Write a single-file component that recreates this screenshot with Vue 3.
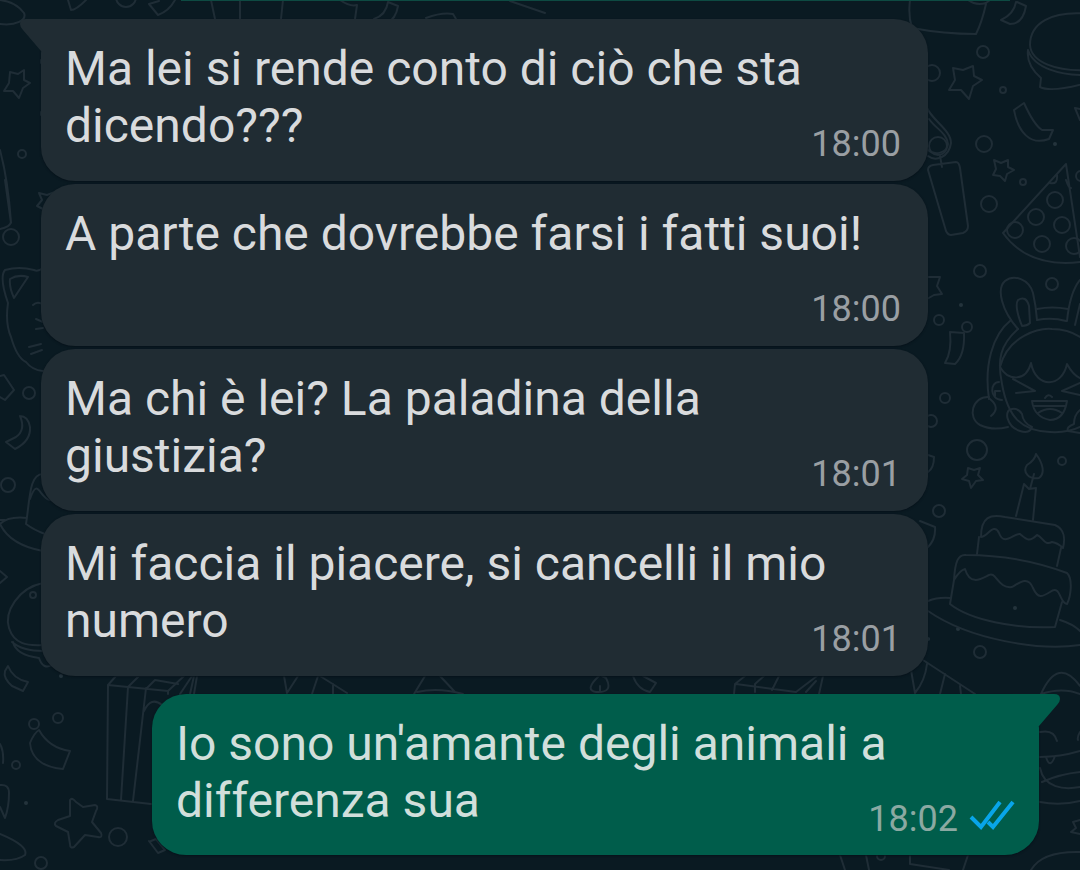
<script setup>
const messages = [
  { id: 1, text: 'Ma lei si rende conto di ciò che sta dicendo???', time: '18:00', tail: true },
  { id: 2, text: 'A parte che dovrebbe farsi i fatti suoi!', time: '18:00' },
  { id: 3, text: 'Ma chi è lei? La paladina della giustizia?', time: '18:01' },
  { id: 4, text: 'Mi faccia il piacere, si cancelli il mio numero', time: '18:01' },
  { id: 5, text: "Io sono un'amante degli animali a differenza sua", time: '18:02', mine: true, tail: true },
]

const confetti = [
  [983, 52, 6], [932, 73, 8], [1003, 90, 3], [984, 144, 8], [1023, 182, 3], [989, 204, 8],
  [980, 271, 6], [1052, 284, 6], [939, 320, 5], [967, 327, 5], [945, 398, 5], [931, 421, 6],
  [977, 450, 10], [1062, 461, 4], [939, 511, 6], [980, 652, 6], [1081, 176, 5],
  [22, 154, 4], [11, 237, 8], [29, 393, 6], [8, 485, 7], [33, 595, 3],
  [34, 724, 5], [58, 718, 5], [16, 765, 4], [118, 837, 9], [41, 863, 6], [126, -3, 10],
  [881, 856, 4],
]
const specks = [[1055, 144], [961, 305], [1015, 608], [958, 629], [61, 676], [26, 803], [928, 639]]
</script>

<template>
  <main class="chat">
    <svg class="wallpaper" viewBox="0 0 1080 870" preserveAspectRatio="xMidYMin slice" aria-hidden="true">
      <g class="doodle">
        <circle v-for="(c, i) in confetti" :key="'c' + i" :cx="c[0]" :cy="c[1]" :r="c[2]" />
        <circle v-for="(s, i) in specks" :key="'s' + i" class="speck" :cx="s[0]" :cy="s[1]" r="2" />

        <!-- cup, streamer and bowl along the top right -->
        <path d="M910 0Q908 16 912 28Q944 34 976 34Q982 22 986 4M968 0Q976 6 986 3L990 0" />
        <path d="M1017 2L1026 6Q1023 24 1010 24L1001 20Q1014 14 1016 2" />
        <path d="M1090 14C1050 10 1030 24 1030 45C1031 62 1056 72 1090 70M1028 50C1034 68 1060 76 1090 75M1028 50Q1026 65 1041 78L1040 87Q1052 93 1090 82" />

        <!-- stars -->
        <path d="M953 68L963 70L973 66L974 76L982 80L973 86L969 99L961 90L949 90L955 80Z" />
        <path d="M994 160L1001 163L1008 160L1008 167L1014 170L1007 174L1005 181L1000 176L993 175L996 169Z" />
        <path d="M968 468L974 470L980 468L978 475L983 480L976 481L971 488L969 481L962 479L967 475Z" />
        <path d="M928 277L940 277L937 286L942 294L934 295L927 299" />
        <path d="M10 72L18 74L24 70L24 80L30 83L23 88L19 98L13 91L4 91L9 83Z" />
        <path d="M39 193L47 195L55 192M39 193L42 200L37 206L43 209" />
        <path d="M70 800Q72 797 76 802L83 807L95 805Q99 806 96 811L92 822L101 833Q103 838 98 837L85 835L74 847Q70 849 70 844L68 832L56 826Q53 823 58 820L70 816Z" />
        <path d="M0 571L7 577L0 583M1080 820L1073 822L1076 828L1071 832L1080 834" />

        <!-- ribbons -->
        <path d="M1014 110L1024 103Q1034 125 1042 130L1053 130L1049 139C1030 146 1018 132 1014 110Z" />
        <path d="M950 332L964 333Q965 355 955 364L945 363Q952 352 950 332Z" />
        <path d="M928 455L934 457Q934 468 928 472M920 521L935 527Q936 539 928 547M1075 108L1080 109M1075 108L1080 120" />
        <path d="M0 376L4 375L14 390L5 400L0 397" />
        <path d="M20 416Q26 430 16 437L6 442L15 449Q31 441 30 427Q28 416 20 416" />
        <path d="M8 666Q13 679 28 682L23 691L12 686Q3 678 5 671Z" />
        <path d="M39 730Q49 748 70 751L63 769Q32 766 30 743Q34 733 39 730Z" />
        <path d="M68 0L71 10Q76 10 86 0M149 4L159 1M149 4L158 15Q169 11 175 0M151 841L156 839L165 850L158 853L149 841" />

        <!-- hanging bauble and candle -->
        <path d="M927 108C932 120 951 130 951 143C949 157 936 162 928 156M929 119C935 128 947 133 948 144C947 153 935 156 928 150" />
        <circle cx="938" cy="146" r="9" />
        <path d="M940 156L942 167M928 170Q928 166 933 165L956 162Q959 162 960 168L968 226Q968 231 963 233L951 235Q948 235 946 231Z" />

        <!-- pizza -->
        <path d="M1066 164L1003 233Q1028 268 1080 262M1066 164L1080 257M1050 183Q1058 185 1057 175M1066 180Q1069 189 1071 188" />
        <circle cx="1055" cy="200" r="8" />
        <circle cx="1036" cy="217" r="8" />
        <circle cx="1015" cy="230" r="8" />
        <circle cx="1062" cy="225" r="8" />
        <circle cx="1042" cy="244" r="8" />
        <circle cx="1074" cy="246" r="8" />

        <!-- girl with rabbit ears -->
        <path d="M1018 329C1002 311 996 289 1005 281C1014 274 1029 279 1033 293Q1036 306 1037 320" />
        <path d="M1022 326Q1014 306 1018 300Q1026 295 1029 306L1030 323Q1027 326 1022 326ZM1037 309Q1052 306 1068 309M1037 320Q1052 317 1066 321M1080 280Q1070 292 1067 321M1080 304L1075 325" />
        <path d="M1011 320C992 335 984 366 989 399M1018 329C1000 345 997 360 1002 384C1008 418 1022 431 1050 432Q1068 433 1080 427" />
        <path d="M1000 367C1008 335 1040 328 1052 329Q1068 329 1080 337M1000 367C1008 381 1026 382 1031 363C1036 389 1062 388 1067 364Q1073 375 1080 378" />
        <path d="M1013 379L1035 391L1016 393M1080 383L1062 391L1080 395M1045 398Q1048 393 1052 397" />
        <path d="M1032 401H1067Q1064 420 1050 420Q1034 417 1032 401ZM1034 406H1065M1038 413Q1050 405 1062 413" />
        <path d="M999 382C990 382 989 399 1002 400M1000 391H995V396M989 397C972 396 967 418 980 425Q992 431 1008 427M990 399Q1001 408 991 416" />
        <path d="M1012 409C1003 410 1007 427 1020 431Q1030 434 1032 427Q1023 423 1022 414Q1018 408 1012 409M1080 410Q1074 415 1074 424Q1066 427 1068 431L1080 433" />

        <!-- birthday cake -->
        <path d="M1036 454C1042 462 1046 473 1039 478C1029 480 1022 472 1027 465Q1035 460 1036 454M1034 474L1030 489M1016 516L1024 484L1029 489L1036 488L1033 520" />
        <path d="M981 537C981 517 990 514 1005 517L1055 525C1065 529 1065 540 1063 548M981 537C987 537 994 522 999 533C1004 547 1014 533 1020 534C1026 539 1029 543 1037 535C1043 537 1044 546 1052 542Q1058 543 1063 548M979 537L977 554M1061 548L1057 566" />
        <path d="M954 580C955 562 958 554 966 555C1005 555 1040 563 1067 573C1073 579 1071 596 1067 604C1059 603 1061 584 1050 592C1042 597 1038 599 1033 588C1028 575 1019 583 1012 587C998 589 996 571 989 575C981 579 970 586 965 569Q960 570 954 580L950 604C970 620 1015 629 1055 627L1062 602" />
        <path d="M928 601Q938 597 950 598M928 611C970 640 1040 651 1080 645M1060 620Q1073 624 1080 631" />

        <!-- left edge: hat, cat, helmet, legs -->
        <path d="M0 24C16 26 27 20 24 13C18 5 9 1 0 0M0 150Q8 180 11 222Q10 227 0 229M5 180L11 223M41 60V63M41 112V115" />
        <path d="M43 268Q38 272 34 270Q19 266 5 270Q-1 277 8 303Q5 323 11 337Q17 358 26 362Q32 370 43 371M10 279Q18 274 28 277L14 298Q9 287 10 279ZM33 305Q37 301 42 304M36 319L43 322M36 329L43 328M29 347L41 344M31 354L42 350" />
        <path d="M43 474C29 474 30 499 26 524Q34 530 45 534M30 499C38 476 39 498 50 500M27 518Q8 516 0 524Q10 545 43 551M0 520H5" />
        <path d="M43 583C18 588 4 612 9 628C14 644 27 646 43 645M12 642Q22 651 44 651M13 642Q16 655 39 658Q43 670 52 665" />
        <path d="M0 744Q4 751 3 763M0 785Q9 784 9 793Q9 807 5 818L0 807M0 834Q29 846 25 855Q17 861 0 860" />

        <!-- present and cones between the bubbles -->
        <path d="M108 685L116 676H184L168 691L108 685L107 799L151 804M128 687L121 800M146 688L133 801M144 711Q151 696 162 705M128 687L139 676M147 688L155 680L178 684M168 691V694M180 694L192 676M190 694L194 676M194 694L197 676" />
        <path d="M284 676L287 693L298 676M318 676L312 694M320 676L347 693M333 684V694M414 694L425 676M440 676L455 692M417 692Q438 687 463 694" />
        <path d="M599 676Q584 690 596 692Q614 693 606 678L602 676M600 686V692M633 676Q638 690 650 692L656 683L643 676M734 694L735 684L745 676M736 684L796 692L817 676M755 692V684L764 676M772 690L779 676M806 692L816 681M819 694L823 676" />
        <path d="M911 670L915 693Q925 681 927 664M923 660L975 694M945 674L940 694M960 686L961 694M1041 694Q1058 656 1080 686M1041 694Q1062 687 1080 694" />

        <!-- bottom right face and plate -->
        <path d="M1040 732Q1054 729 1057 741M1080 732Q1077 737 1078 740M1040 757Q1060 757 1080 751M1046 757Q1050 770 1055 756M1040 768C1044 788 1064 790 1080 787M1042 782Q1060 774 1080 772M1040 802Q1060 806 1080 801M1031 870Q1042 851 1080 852M840 855L845 870M866 855L869 870M910 855V864L949 870M968 855L963 870" />

        <!-- tops of doodles peeking above the first bubble -->
        <path d="M211 0L215 19M240 0V19M283 0L281 19M340 0Q350 7 357 5Q356 12 355 19M388 2L398 6Q396 19 386 24M388 2Q386 15 374 19M426 18Q442 12 453 14L456 19M510 1L545 13" />
      </g>
    </svg>

    <div class="previous"></div>
    <ol class="messages">
      <li v-for="m in messages" :key="m.id" class="bubble" :class="{ mine: m.mine }">
        <svg v-if="m.tail" class="tail" viewBox="0 0 56 33" aria-hidden="true">
          <path d="M56 0H6Q0 0 0 5Q0 8 3 11L21 32H56Z" />
        </svg>
        <span class="text">{{ m.text }}</span>
        <div class="meta">
          <time>{{ m.time }}</time>
          <svg v-if="m.mine" class="ticks" viewBox="0 0 46 34" role="img" aria-label="Letto">
            <path d="M2 19L12 29L31 4M19 24L24 29L44 4" />
          </svg>
        </div>
      </li>
    </ol>
  </main>
</template>

<style>
body {
  background: #0a1a22;
}
</style>

<style scoped>
.chat {
  position: relative;
  box-sizing: border-box;
  min-height: 100vh;
  padding: 0 41px 14px;
  overflow: hidden;
  background: #0a1a22;
  font-family: Roboto, "Noto Sans", sans-serif;
}
.wallpaper {
  position: absolute;
  inset: 0;
  width: 100%;
  height: 100%;
}
.doodle {
  fill: none;
  stroke: #1f2d36;
  stroke-width: 2;
  stroke-linejoin: round;
  stroke-linecap: round;
}
.speck {
  fill: #24333c;
  stroke: none;
}
.previous {
  position: relative;
  height: 1px;
  margin: 0 29px 18px 140px;
  background: #0d4a42;
}
.messages {
  position: relative;
  display: flex;
  flex-direction: column;
  gap: 3px;
  margin: 0;
  padding: 0;
  list-style: none;
}
.bubble {
  --fill: #202c33;
  position: relative;
  display: flow-root;
  margin-right: 111px;
  padding: 21px 27px 16px 24px;
  border-radius: 34px;
  background: var(--fill);
  box-shadow: 0 1px 2px #06121a;
  color: #d9dbdd;
  font-size: 48px;
  line-height: 57px;
}
.mine {
  --fill: #005d4b;
  margin: 15px 0 0 111px;
  padding-right: 24px;
  padding-bottom: 15px;
  color: #d1dfdb;
}
.tail {
  position: absolute;
  top: 0;
  left: -21px;
  width: 56px;
  height: 33px;
  fill: var(--fill);
}
.mine .tail {
  right: -21px;
  left: auto;
  transform: scaleX(-1);
}
/* The time sits beside the last line, or drops below it when the line is full. */
.meta {
  float: right;
  display: flex;
  align-items: flex-start;
  gap: 11px;
  margin-top: 26px;
  color: #9a9fa3;
  font-size: 36px;
  line-height: 42px;
}
.mine .meta {
  color: #8ba9a2;
}
.ticks {
  width: 46px;
  height: 34px;
  fill: none;
  stroke: #08a5e9;
  stroke-width: 4;
}
</style>
